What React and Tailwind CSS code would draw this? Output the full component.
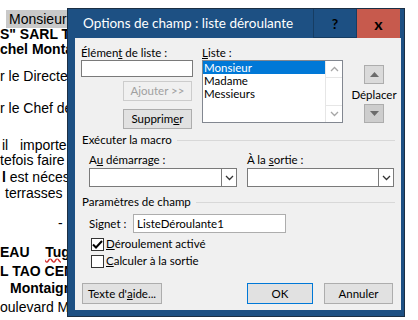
import React from 'react';

const ui = { fontFamily: 'Lato, "Liberation Sans", sans-serif' };
const doc = { fontFamily: '"Liberation Sans", Arial, sans-serif' };

function Chevron({ up = false, className = '' }) {
  return (
    <svg width="9" height="6" viewBox="0 0 9 6" className={className}>
      <path
        d={up ? 'M1 5 L4.5 1.5 L8 5' : 'M1 1 L4.5 4.5 L8 1'}
        fill="none"
        stroke="currentColor"
        strokeWidth="1.3"
      />
    </svg>
  );
}

function Triangle({ up = false }) {
  return (
    <svg width="9" height="5" viewBox="0 0 9 5">
      <path d={up ? 'M0 5 L4.5 0 L9 5 Z' : 'M0 0 L4.5 5 L9 0 Z'} fill="#6b6b6b" />
    </svg>
  );
}

function Combo({ width }) {
  return (
    <div className={`flex h-[19px] border border-[#7a7a7a] bg-white ${width}`}>
      <div className="flex-1" />
      <div className="flex w-[15px] items-center justify-center border-l border-[#7a7a7a] text-[#333]">
        <Chevron />
      </div>
    </div>
  );
}

function GroupHeader({ children }) {
  return (
    <div className="flex h-[14px] items-center pr-[6px]">
      <span className="ml-px whitespace-nowrap leading-[14px]">{children}</span>
      <div className="ml-[5px] h-px flex-1 bg-[#d8d8d8]" />
    </div>
  );
}

function Checkbox({ checked, children }) {
  return (
    <div className="ml-[10px] flex h-[14px] items-center">
      <div className="flex h-[13px] w-[13px] items-center justify-center border border-[#333] bg-white">
        {checked && (
          <svg width="11" height="9" viewBox="0 0 11 9">
            <path d="M1 4.5 L4 7.5 L10 1" fill="none" stroke="#000" strokeWidth="2" />
          </svg>
        )}
      </div>
      <span className="ml-[2px] leading-[14px]">{children}</span>
    </div>
  );
}

function DocLine({ className = '', children }) {
  return <div className={`h-[15px] whitespace-nowrap leading-[15px] ${className}`}>{children}</div>;
}

export default function App() {
  return (
    <div className="relative h-[320px] w-[418px] overflow-hidden bg-white text-[14px] text-black" style={doc}>
      {/* document behind the dialog */}
      <div className="flex w-[70px] flex-col overflow-hidden pt-[12px]">
        <DocLine>
          <span className="ml-[6px] bg-[#c9c9c9] px-[3px] py-[1px]">Monsieur</span>
        </DocLine>
        <DocLine className="font-bold">S" SARL TA</DocLine>
        <DocLine className="font-bold">chel Monta</DocLine>
        <DocLine className="mt-[12px]">r le Directe</DocLine>
        <DocLine className="mt-[17px]">r le Chef de</DocLine>
        <DocLine className="mt-[22px] ml-[2px]">il&nbsp;&nbsp;&nbsp;importe</DocLine>
        <DocLine>tefois faire</DocLine>
        <DocLine className="mt-[2px] ml-[2px]">
          <b>l</b> est néces
        </DocLine>
        <DocLine className="mt-px ml-[5px]">terrasses :</DocLine>
        <DocLine className="mt-[15px] ml-[58px]">-</DocLine>
        <DocLine className="mt-[14px] font-bold">
          EAU&nbsp;&nbsp;&nbsp;&nbsp;
          <span className="underline decoration-wavy decoration-[#d03030]">Tugo</span>
        </DocLine>
        <DocLine className="mt-[4px] font-bold">L TAO CEN</DocLine>
        <DocLine className="mt-[2px] ml-[10px] font-bold">Montaign</DocLine>
        <DocLine className="mt-[4px]">oulevard Mi</DocLine>
      </div>

      {/* dialog window */}
      <div
        className="absolute left-[67px] top-[8px] flex h-[309px] w-[338px] flex-col border border-[#1b2f44] bg-[#1d5083] text-[11.5px]"
        style={ui}
      >
        {/* title bar */}
        <div className="flex h-[29px] items-stretch pr-[4px]">
          <div className="flex flex-1 items-center pl-[15px] text-[13.5px] text-white">
            Options de champ : liste déroulante
          </div>
          <div className="flex w-[44px] items-center justify-center border-x border-b border-[#163d63] text-[14px] font-bold">
            ?
          </div>
          <div className="flex w-[43px] items-center justify-center bg-[#c75a4d] text-[16px] font-bold">x</div>
        </div>

        {/* body */}
        <div className="ml-[7px] mr-[3px] mb-[6px] flex flex-1 flex-col bg-[#f0f0f0] pl-[6px]">
          {/* list editing */}
          <div className="mt-[8px] flex items-start">
            <div className="flex w-[112px] flex-col">
              <div className="h-[14px] leading-[14px]">
                Élémen<u>t</u> de liste :
              </div>
              <div className="h-[17px] border border-[#7a7a7a] bg-white" />
              <div className="mt-[4px] ml-[42px] flex h-[20px] w-[69px] items-center justify-center border border-[#cccccc] text-[#a0a0a0]">
                Ajouter &gt;&gt;
              </div>
              <div className="mt-[8px] ml-[42px] flex h-[20px] w-[69px] items-center justify-center border border-[#adadad] bg-[#e1e1e1]">
                Supprim<u>e</u>r
              </div>
            </div>

            <div className="ml-[9px] flex flex-col">
              <div className="h-[14px] leading-[14px]">
                <u>L</u>iste :
              </div>
              <div className="flex h-[63px] w-[141px] border border-[#828790] bg-white">
                <div className="flex flex-1 flex-col">
                  <div className="h-[13px] bg-[#0078d7] pl-px leading-[13px] text-white">Monsieur</div>
                  <div className="h-[13px] pl-px leading-[13px]">Madame</div>
                  <div className="h-[13px] pl-px leading-[13px]">Messieurs</div>
                </div>
                <div className="flex w-[17px] flex-col justify-between border-l border-[#e6e6e6] text-[#a6a6a6]">
                  <div className="flex h-[17px] items-center justify-center border-b border-[#e6e6e6]">
                    <Chevron up />
                  </div>
                  <div className="flex h-[17px] items-center justify-center border-t border-[#e6e6e6]">
                    <Chevron />
                  </div>
                </div>
              </div>
            </div>

            <div className="ml-[9px] flex w-[44px] flex-col items-center">
              <div className="mt-[19px] flex h-[19px] w-[20px] items-center justify-center border border-[#adadad] bg-[#dadada]">
                <Triangle up />
              </div>
              <div className="mt-[4px] h-[14px] leading-[14px]">Déplacer</div>
              <div className="mt-[2px] flex h-[19px] w-[20px] items-center justify-center border border-[#adadad] bg-[#cdcdcd]">
                <Triangle />
              </div>
            </div>
          </div>

          {/* macros */}
          <div className="mt-[4px]">
            <GroupHeader>Exécuter la macro</GroupHeader>
          </div>
          <div className="mt-[6px] ml-[8px] grid grid-cols-[148px_147px] gap-x-[10px]">
            <div className="h-[14px] leading-[14px]">
              A<u>u</u> démarrage :
            </div>
            <div className="h-[14px] leading-[14px]">
              À la <u>s</u>ortie :
            </div>
            <div className="mt-px">
              <Combo width="w-[148px]" />
            </div>
            <div className="mt-px">
              <Combo width="w-[147px]" />
            </div>
          </div>

          {/* field settings */}
          <div className="mt-[8px]">
            <GroupHeader>Paramètres de champ</GroupHeader>
          </div>
          <div className="mt-[5px] ml-[8px] flex h-[19px] items-center">
            <span className="w-[44px] leading-[14px]">
              Si<u>g</u>net :
            </span>
            <div className="flex h-[19px] w-[153px] items-center border border-[#adadad] bg-white pl-[3px]">
              ListeDéroulante1
            </div>
          </div>
          <div className="mt-[4px]">
            <Checkbox checked>
              <u>D</u>éroulement activé
            </Checkbox>
          </div>
          <div className="mt-[3px]">
            <Checkbox>
              <u>C</u>alculer à la sortie
            </Checkbox>
          </div>

          {/* buttons */}
          <div className="mt-[15px] flex h-[21px] pr-[8px]">
            <div className="ml-px flex w-[80px] items-center justify-center border border-[#adadad] bg-[#e1e1e1]">
              Texte d'<u>a</u>ide...
            </div>
            <div className="ml-auto flex w-[66px] items-center justify-center border border-[#0078d7] bg-[#e1e1e1]">
              OK
            </div>
            <div className="ml-[11px] flex w-[69px] items-center justify-center border border-[#adadad] bg-[#e1e1e1]">
              Annuler
            </div>
          </div>
        </div>
      </div>
    </div>
  );
}
